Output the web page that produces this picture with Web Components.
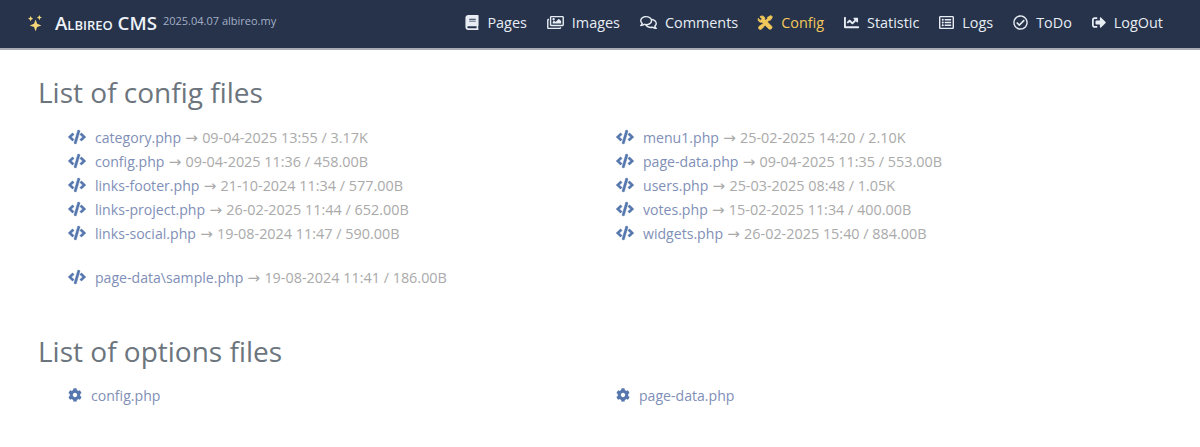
<!DOCTYPE html>
<html>
<head>
<meta charset="utf-8">
<title>Albireo CMS</title>
<style>
  html, body { margin: 0; padding: 0; background: #fff; }
  body { font-family: "Open Sans", sans-serif; font-size: 14px; color: #999; }
</style>
</head>
<body>
<nav-bar>
  <brand-mark slot="brand" version="2025.04.07" site="albireo.my">Albireo CMS</brand-mark>
  <nav-item icon="book">Pages</nav-item>
  <nav-item icon="images">Images</nav-item>
  <nav-item icon="comments">Comments</nav-item>
  <nav-item icon="tools" active>Config</nav-item>
  <nav-item icon="chart">Statistic</nav-item>
  <nav-item icon="list">Logs</nav-item>
  <nav-item icon="check">ToDo</nav-item>
  <nav-item icon="logout">LogOut</nav-item>
</nav-bar>

<main-content>
  <file-section heading="List of config files">
    <file-row name="category.php" meta="09-04-2025 13:55 / 3.17K"></file-row>
    <file-row slot="right" name="menu1.php" meta="25-02-2025 14:20 / 2.10K"></file-row>
    <file-row name="config.php" meta="09-04-2025 11:36 / 458.00B"></file-row>
    <file-row slot="right" name="page-data.php" meta="09-04-2025 11:35 / 553.00B"></file-row>
    <file-row name="links-footer.php" meta="21-10-2024 11:34 / 577.00B"></file-row>
    <file-row slot="right" name="users.php" meta="25-03-2025 08:48 / 1.05K"></file-row>
    <file-row name="links-project.php" meta="26-02-2025 11:44 / 652.00B"></file-row>
    <file-row slot="right" name="votes.php" meta="15-02-2025 11:34 / 400.00B"></file-row>
    <file-row name="links-social.php" meta="19-08-2024 11:47 / 590.00B"></file-row>
    <file-row slot="right" name="widgets.php" meta="26-02-2025 15:40 / 884.00B"></file-row>
    <file-row slot="extra" name="page-data\sample.php" meta="19-08-2024 11:41 / 186.00B"></file-row>
  </file-section>
  <file-section heading="List of options files" kind="options">
    <file-row icon="cog" name="config.php"></file-row>
    <file-row icon="cog" slot="right" name="page-data.php"></file-row>
  </file-section>
</main-content>

<script>
const ICONS = {
  book: '<svg viewBox="0 0 448 512"><path d="M448 360V24c0-13.300-10.700-24-24-24H96C43 0 0 43 0 96v320c0 53 43 96 96 96h328c13.300 0 24-10.700 24-24v-16c0-7.500-3.500-14.300-8.900-18.700-4.200-15.400-4.200-59.300 0-74.700 5.400-4.300 8.900-11.100 8.900-18.600zM128 134c0-3.300 2.700-6 6-6h212c3.300 0 6 2.700 6 6v20c0 3.300-2.700 6-6 6H134c-3.300 0-6-2.700-6-6v-20zm0 64c0-3.300 2.700-6 6-6h212c3.300 0 6 2.700 6 6v20c0 3.300-2.700 6-6 6H134c-3.300 0-6-2.700-6-6v-20zm253.400 250H96c-17.700 0-32-14.300-32-32 0-17.600 14.400-32 32-32h285.400c-1.900 17.100-1.900 46.900 0 64z"/></svg>',
  images: '<svg viewBox="0 0 576 512"><path d="M480 416v16c0 26.500-21.500 48-48 48H48c-26.500 0-48-21.500-48-48V176c0-26.500 21.500-48 48-48h16v48H54a6 6 0 0 0-6 6v244a6 6 0 0 0 6 6h372a6 6 0 0 0 6-6v-10h48zm42-336H150a6 6 0 0 0-6 6v244a6 6 0 0 0 6 6h372a6 6 0 0 0 6-6V86a6 6 0 0 0-6-6zm6-48c26.500 0 48 21.500 48 48v256c0 26.500-21.500 48-48 48H144c-26.500 0-48-21.500-48-48V80c0-26.500 21.500-48 48-48h384zM264 144c0 22.100-17.900 40-40 40s-40-17.900-40-40 17.900-40 40-40 40 17.900 40 40zm-72 96l39.500-39.500c4.700-4.700 12.300-4.700 17 0L288 240l103.500-103.500c4.700-4.700 12.300-4.700 17 0L480 208v80H192v-48z"/></svg>',
  comments: '<svg viewBox="0 0 576 512"><path d="M532 386.200c27.500-27.100 44-61.100 44-98.200 0-80-76.500-146.100-176.200-157.900C368.300 72.500 294.300 32 208 32 93.100 32 0 103.600 0 192c0 37 16.500 71 44 98.200-15.300 30.700-37.300 54.500-37.700 54.900-6.300 6.700-8.100 16.500-4.400 25 3.600 8.500 12 14 21.200 14 53.500 0 96.700-20.200 125.200-38.800 9.200 2.100 18.700 3.700 28.400 4.900C208.100 407.600 281.800 448 368 448c20.800 0 40.800-2.400 59.800-6.800C456.300 459.700 499.400 480 553 480c9.200 0 17.500-5.500 21.200-14 3.600-8.500 1.900-18.300-4.400-25-.4-.3-22.500-24.100-37.800-54.800zm-392.800-92.300L122.100 305c-14.100 9.100-28.500 16.300-43.100 21.400 2.700-4.700 5.400-9.700 8-14.800l15.500-31.100L77.700 256C64.200 242.600 48 220.700 48 192c0-60.700 73.300-112 160-112s160 51.300 160 112-73.300 112-160 112c-16.500 0-33-1.900-49-5.600l-19.800-4.500zM498.300 352l-24.700 24.400 15.500 31.100c2.600 5.100 5.300 10.100 8 14.800-14.600-5.100-29-12.300-43.100-21.400l-17.100-11.100-19.800 4.600c-16 3.700-32.500 5.600-49 5.600-54 0-102.200-20.100-131.300-49.700C338 339.500 416 272.900 416 192c0-3.400-.4-6.700-.7-10C479.700 196.500 528 238.800 528 288c0 28.700-16.200 50.600-29.700 64z"/></svg>',
  tools: '<svg viewBox="0 0 24 24" overflow="visible"><path stroke="currentColor" stroke-width="1.200" stroke-linejoin="round" d="M6.500 1.500c-1.300 0-2.500.5-3.500 1.300l3.600 3.200-1 1.800-2.400.5L.4 5.200C-.6 8 1 11 3.800 11.600c1 .2 1.900.1 2.700-.2l11 11c1.200 1.100 4 .3 4.900-2.100.3-1.100.1-1.700-.6-2.400L10.900 7c.7-3-1.500-5.500-4.400-5.500z"/><path stroke="currentColor" stroke-width="1.200" stroke-linejoin="round" d="M20.800.8l2.400 2.400-3.400 5.100-2.100.2-3.400 3.400-2.700-2.700 3.400-3.400.2-2.100zM9 13.300l2.700 2.700-5.600 6.100c-1.300 1.300-3.200 1.300-4.400.1s-1-3.100.2-4.200z"/></svg>',
  chart: '<svg viewBox="0 0 512 512"><path d="M496 384H64V80c0-8.840-7.160-16-16-16H16C7.160 64 0 71.160 0 80v336c0 17.670 14.330 32 32 32h464c8.840 0 16-7.160 16-16v-32c0-8.840-7.160-16-16-16zM464 96H345.940c-21.380 0-32.090 25.850-16.970 40.970l32.400 32.400L288 242.750l-73.370-73.370c-12.500-12.500-32.760-12.500-45.250 0l-68.690 68.690c-6.250 6.250-6.250 16.380 0 22.630l22.620 22.620c6.250 6.250 16.380 6.250 22.630 0L192 237.250l73.370 73.370c12.500 12.500 32.760 12.500 45.250 0l96-96 32.400 32.400c15.120 15.120 40.970 4.410 40.970-16.970V112c.01-8.840-7.150-16-16-16z"/></svg>',
  list: '<svg viewBox="0 0 512 512"><path d="M464 32H48C21.500 32 0 53.500 0 80v352c0 26.500 21.500 48 48 48h416c26.500 0 48-21.500 48-48V80c0-26.500-21.500-48-48-48zm-6 400H54c-3.300 0-6-2.700-6-6V86c0-3.300 2.700-6 6-6h404c3.300 0 6 2.700 6 6v340c0 3.300-2.700 6-6 6zm-42-92v24c0 6.600-5.400 12-12 12H204c-6.600 0-12-5.400-12-12v-24c0-6.600 5.400-12 12-12h200c6.600 0 12 5.400 12 12zm0-96v24c0 6.600-5.400 12-12 12H204c-6.600 0-12-5.400-12-12v-24c0-6.600 5.400-12 12-12h200c6.600 0 12 5.400 12 12zm0-96v24c0 6.600-5.400 12-12 12H204c-6.600 0-12-5.400-12-12v-24c0-6.600 5.400-12 12-12h200c6.600 0 12 5.400 12 12zm-252 12c0 19.900-16.100 36-36 36s-36-16.100-36-36 16.100-36 36-36 36 16.100 36 36zm0 96c0 19.900-16.100 36-36 36s-36-16.100-36-36 16.100-36 36-36 36 16.100 36 36zm0 96c0 19.900-16.100 36-36 36s-36-16.100-36-36 16.100-36 36-36 36 16.100 36 36z"/></svg>',
  check: '<svg viewBox="0 0 512 512"><path d="M256 8C119 8 8 119 8 256s111 248 248 248 248-111 248-248S393 8 256 8zm0 48c110.500 0 200 89.500 200 200 0 110.500-89.500 200-200 200-110.500 0-200-89.500-200-200 0-110.500 89.500-200 200-200m140.200 130.300l-22.500-22.700c-4.700-4.700-12.300-4.700-17-.1L215.300 303.700l-59.800-60.300c-4.700-4.700-12.300-4.700-17-.1l-22.700 22.500c-4.700 4.700-4.700 12.300-.1 17l90.800 91.500c4.700 4.700 12.300 4.700 17 .1l172.600-171.200c4.700-4.700 4.700-12.300.1-17z"/></svg>',
  logout: '<svg viewBox="0 0 512 512"><path d="M497 273L329 441c-15 15-41 4.500-41-17v-96H152c-13.300 0-24-10.700-24-24v-96c0-13.300 10.700-24 24-24h136V88c0-21.400 25.900-32 41-17l168 168c9.300 9.400 9.300 24.600 0 34zM192 436v-40c0-6.600-5.400-12-12-12H96c-17.700 0-32-14.300-32-32V160c0-17.700 14.300-32 32-32h84c6.600 0 12-5.400 12-12V76c0-6.600-5.400-12-12-12H96c-53 0-96 43-96 96v192c0 53 43 96 96 96h84c6.600 0 12-5.400 12-12z"/></svg>',
  code: '<svg viewBox="0 0 640 512"><path d="M278.900 511.500l-61-17.700c-6.400-1.800-10-8.500-8.200-14.900L346.200 8.700c1.800-6.400 8.500-10 14.900-8.200l61 17.700c6.400 1.800 10 8.500 8.200 14.900L293.800 503.300c-1.900 6.400-8.500 10.100-14.900 8.200zm-114-112.200l43.500-46.400c4.600-4.900 4.300-12.700-.8-17.200L117 256l90.600-79.700c5.100-4.500 5.500-12.300.8-17.200l-43.500-46.400c-4.500-4.800-12.100-5.100-17-.5L3.800 247.200c-5.100 4.700-5.100 12.800 0 17.500l144.100 135.100c4.900 4.600 12.500 4.400 17-.5zm327.200.6l144.100-135.100c5.100-4.700 5.100-12.800 0-17.500L492.100 112.100c-4.800-4.500-12.400-4.300-17 .5L431.600 159c-4.600 4.900-4.300 12.700.8 17.200L523 256l-90.600 79.700c-5.100 4.500-5.500 12.300-.8 17.200l43.500 46.400c4.500 4.900 12.100 5.100 17 .6z"/></svg>',
  cog: '<svg viewBox="0 0 512 512"><path d="M487.400 315.700l-42.600-24.600c4.300-23.200 4.300-47 0-70.200l42.600-24.600c4.900-2.800 7.100-8.600 5.500-14-11.100-35.600-30-67.800-54.700-94.600-3.800-4.100-10-5.100-14.800-2.300L380.800 110c-17.900-15.400-38.500-27.300-60.800-35.100V25.800c0-5.600-3.900-10.500-9.400-11.700-36.700-8.200-74.300-7.800-109.200 0-5.500 1.200-9.400 6.100-9.400 11.700V75c-22.200 7.900-42.800 19.800-60.800 35.100L88.700 85.500c-4.900-2.800-11-1.900-14.800 2.300-24.700 26.700-43.600 58.900-54.700 94.600-1.700 5.400.6 11.200 5.500 14L67.300 221c-4.300 23.200-4.300 47 0 70.200l-42.600 24.600c-4.900 2.800-7.100 8.600-5.500 14 11.100 35.600 30 67.800 54.700 94.600 3.800 4.100 10 5.100 14.800 2.300l42.600-24.600c17.900 15.400 38.500 27.300 60.800 35.100v49.200c0 5.600 3.900 10.500 9.400 11.700 36.700 8.200 74.300 7.800 109.200 0 5.500-1.200 9.400-6.100 9.400-11.700v-49.200c22.200-7.900 42.800-19.800 60.800-35.100l42.600 24.600c4.900 2.800 11 1.900 14.800-2.300 24.700-26.700 43.600-58.900 54.700-94.600 1.500-5.500-.7-11.300-5.600-14.100zM256 336c-44.100 0-80-35.900-80-80s35.900-80 80-80 80 35.900 80 80-35.900 80-80 80z"/></svg>',
  magic: '<svg viewBox="0 0 24 28"><path d="M13 9l2.700 7.300L23 19l-7.300 2.700L13 29l-2.700-7.300L3 19l7.300-2.700z"/><path d="M19.500 1l1.400 3.100L24 5.500l-3.100 1.400L19.500 10l-1.400-3.100L15 5.500l3.100-1.400z"/><path d="M4.500 3l1.500 3 3 1.500L6 9l-1.500 3L3 9 0 7.500 3 6z"/></svg>'
};

// drawn widths in the nav, the glyphs are not all the same shape
const NAV_WIDTHS = { book: 14, images: 17, comments: 17, tools: 15, chart: 15, list: 15, check: 15, logout: 14 };

class NavBar extends HTMLElement {
  constructor() {
    super();
    this.attachShadow({ mode: 'open' }).innerHTML = `
      <style>
        :host {
          display: flex;
          align-items: center;
          justify-content: space-between;
          box-sizing: border-box;
          height: 50px;
          padding: 0 37px 3px 28px;
          background: #26334b;
          border-bottom: 2px solid #a9adb3;
        }
        nav { display: flex; align-items: center; gap: 20px; }
      </style>
      <slot name="brand"></slot>
      <nav><slot></slot></nav>`;
  }
}

class BrandMark extends HTMLElement {
  constructor() {
    super();
    this.attachShadow({ mode: 'open' }).innerHTML = `
      <style>
        :host { display: flex; align-items: center; color: #fff; }
        .icon { width: 14px; height: 17px; fill: #f5d77a; margin-right: 13px; }
        .icon svg { display: block; width: 100%; height: 100%; }
        .name {
          font: 600 18.7px "Open Sans", sans-serif;
          font-variant: small-caps;
          color: #eef2f8;
        }
        .ver { font-size: 11px; color: #a3afc6; margin: 0 0 5px 6px; }
      </style>
      <span class="icon">${ICONS.magic}</span>
      <span class="name"><slot></slot></span>
      <span class="ver">${this.getAttribute('version')} ${this.getAttribute('site')}</span>`;
  }
}

class NavItem extends HTMLElement {
  constructor() {
    super();
    const color = this.hasAttribute('active') ? '#f3c85a' : '#e8edf4';
    const icon = this.getAttribute('icon');
    this.attachShadow({ mode: 'open' }).innerHTML = `
      <style>
        :host { display: flex; align-items: center; gap: 8px; font-size: 14.4px; color: ${color}; }
        span { display: flex; width: ${NAV_WIDTHS[icon]}px; height: 15px; fill: currentColor; }
        svg { width: 100%; height: 100%; }
      </style>
      <span>${ICONS[icon]}</span><slot></slot>`;
  }
}

class MainContent extends HTMLElement {
  constructor() {
    super();
    this.attachShadow({ mode: 'open' }).innerHTML = `
      <style>
        :host { display: flex; flex-direction: column; gap: 44px; padding: 24px 38px 0; }
      </style>
      <slot></slot>`;
  }
}

class FileSection extends HTMLElement {
  constructor() {
    super();
    this.attachShadow({ mode: 'open' }).innerHTML = `
      <style>
        :host { display: block; --after-heading: 15px; }
        :host([kind="options"]) { --after-heading: 14px; }
        h2 { margin: 0 0 var(--after-heading); font-size: 28px; line-height: 36px; font-weight: 400; color: #6c757d; }
        .cols { display: grid; grid-template-columns: 548px 1fr; padding-left: 30px; }
        .col { display: flex; flex-direction: column; }
        .extra { padding: 20px 0 0 30px; display: block; }
      </style>
      <h2>${this.getAttribute('heading')}</h2>
      <div class="cols">
        <div class="col"><slot></slot></div>
        <div class="col"><slot name="right"></slot></div>
      </div>
      <div class="extra"><slot name="extra"></slot></div>`;
  }
}

class FileRow extends HTMLElement {
  constructor() {
    super();
    const meta = this.getAttribute('meta');
    const cog = this.getAttribute('icon') === 'cog';
    this.attachShadow({ mode: 'open' }).innerHTML = `
      <style>
        :host { display: flex; align-items: center; height: 24px; font-size: 14.4px; color: #aaa; white-space: pre; }
        .icon { display: flex; width: ${cog ? 14 : 18}px; height: 14px; margin-right: 9px; fill: #5577ad; }
        .icon svg { stroke: #5577ad; stroke-width: ${cog ? 0 : 14}; }
        svg { width: 100%; height: 100%; overflow: visible; }
        a { color: #7f8fb8; font-size: 14.1px; }
        .arrow { font-family: "DejaVu Sans", sans-serif; font-size: 15px; margin: 0 .5px; }
      </style>
      <span class="icon">${ICONS[cog ? 'cog' : 'code']}</span><span><a>${this.getAttribute('name')}</a>${meta ? ' <span class="arrow">→</span> ' + meta : ''}</span>`;
  }
}

customElements.define('nav-bar', NavBar);
customElements.define('brand-mark', BrandMark);
customElements.define('nav-item', NavItem);
customElements.define('main-content', MainContent);
customElements.define('file-section', FileSection);
customElements.define('file-row', FileRow);
</script>
</body>
</html>
